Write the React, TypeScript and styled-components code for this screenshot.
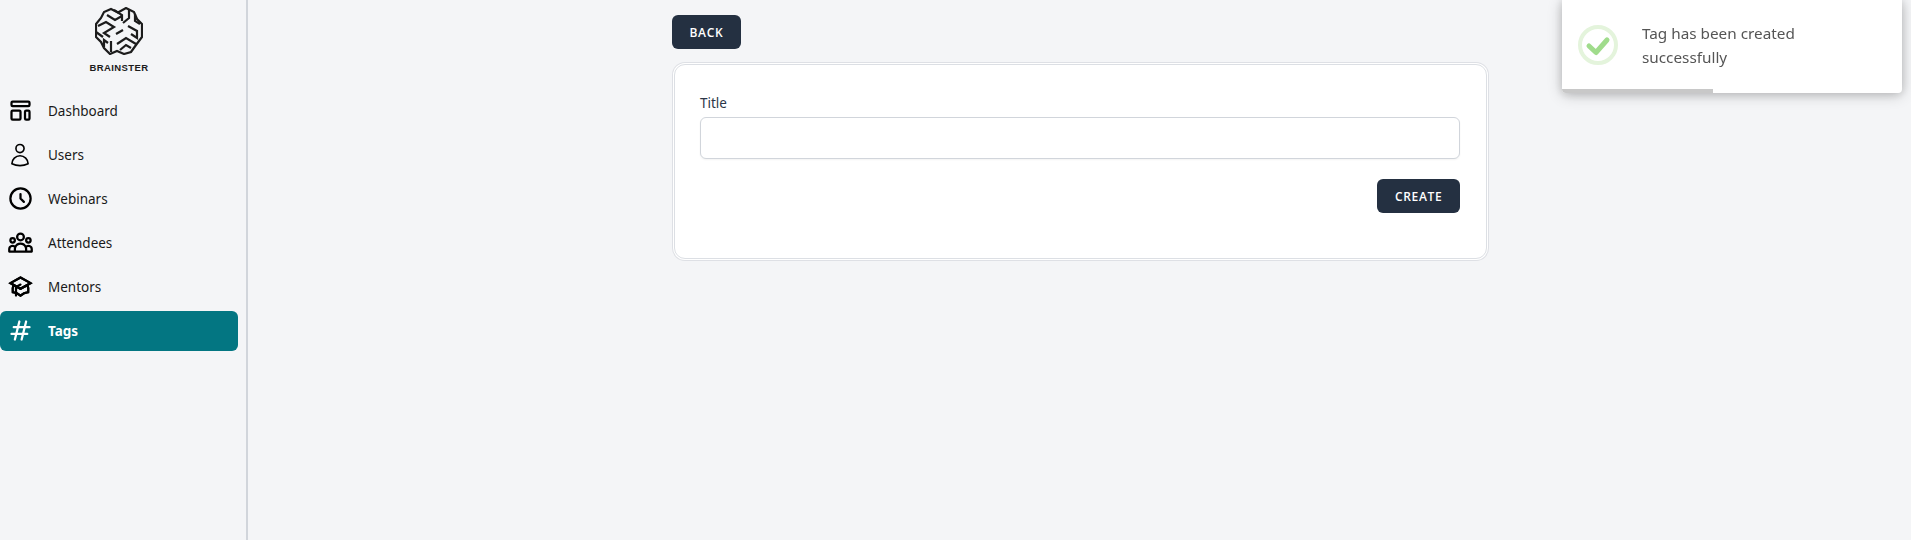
import React from 'react';
import styled, { createGlobalStyle } from 'styled-components';
import {
  HiOutlineAcademicCap,
  HiOutlineClock,
  HiOutlineHashtag,
  HiOutlineTemplate,
  HiOutlineUserGroup,
} from 'react-icons/hi';
import { HiOutlineUser } from 'react-icons/hi2';

const GlobalStyle = createGlobalStyle`
  html, body {
    margin: 0;
    padding: 0;
    background: #f4f5f7;
    font-family: "Noto Sans", "Open Sans", sans-serif;
  }
  * {
    box-sizing: border-box;
  }
`;

const Page = styled.div`
  display: flex;
  height: 540px;
  overflow: hidden;
  background: #f4f5f7;
`;

const Sidebar = styled.aside`
  width: 248px;
  flex-shrink: 0;
  padding-top: 7px;
  border-right: 2px solid #d1d5db;
`;

const LogoBlock = styled.div`
  width: 238px;
  display: flex;
  flex-direction: column;
  align-items: center;
  margin-bottom: 18px;
`;

const LogoName = styled.span`
  margin-top: 7px;
  font-family: "Liberation Sans", Arial, sans-serif;
  font-size: 9.500px;
  line-height: 11px;
  font-weight: 700;
  letter-spacing: 0.4px;
  color: #1c1c1c;
`;

const Nav = styled.nav`
  display: flex;
  flex-direction: column;
  gap: 4px;
  width: 238px;
`;

const NavItem = styled.a<{ $active?: boolean }>`
  display: flex;
  align-items: center;
  height: 40px;
  padding: 0 0 1px 6px;
  border-radius: 6px;
  font-size: 13.500px;
  font-weight: ${(p) => (p.$active ? 700 : 400)};
  color: ${(p) => (p.$active ? '#ffffff' : '#1a1a1a')};
  background: ${(p) => (p.$active ? '#037682' : 'transparent')};
`;

const NavIcon = styled.span<{ $active?: boolean }>`
  display: flex;
  align-items: center;
  justify-content: center;
  width: 28px;
  margin-right: 14px;
  flex-shrink: 0;
  color: ${(p) => (p.$active ? '#ffffff' : '#000000')};
`;

const Main = styled.main`
  flex: 1;
  display: flex;
  justify-content: center;
  padding: 15px 0 0 1px;
`;

const Column = styled.div`
  width: 816px;
  display: flex;
  flex-direction: column;
  align-items: flex-start;
`;

const Button = styled.button`
  height: 34px;
  padding: 0 17.500px;
  border: 0;
  border-radius: 6px;
  background: #243041;
  color: #ffffff;
  font-family: "Open Sans", sans-serif;
  font-size: 12px;
  font-weight: 600;
  letter-spacing: 0.7px;
  text-transform: uppercase;
`;

const Card = styled.section`
  width: 813px;
  height: 195px;
  margin: 15px 1px 0 2px;
  padding: 28px 26px 28px 25px;
  background: #ffffff;
  border: 1px solid #dcdfe4;
  border-radius: 11px;
  box-shadow: 0 0 0 1px #ffffff, 0 0 0 2px #dee0e5;
`;

const Label = styled.label`
  display: block;
  font-size: 13.500px;
  line-height: 20px;
  color: #2b3648;
  margin-bottom: 4px;
`;

const TextInput = styled.input`
  display: block;
  width: 100%;
  height: 42px;
  border: 1px solid #d1d5db;
  border-radius: 6px;
  background: #ffffff;
  box-shadow: 0 1px 2px rgba(0, 0, 0, 0.05);
`;

const Actions = styled.div`
  display: flex;
  justify-content: flex-end;
  margin-top: 20px;
`;

const Toast = styled.div`
  position: fixed;
  top: 0;
  right: 9px;
  width: 340px;
  height: 93px;
  display: flex;
  align-items: center;
  padding: 0 16px 3px;
  background: #ffffff;
  border-radius: 0 0 4px 4px;
  box-shadow: 0 1px 10px rgba(0, 0, 0, 0.15), 0 2px 15px rgba(0, 0, 0, 0.2);
  font-family: "Noto Sans", sans-serif;
  font-size: 15.300px;
  line-height: 24px;
  color: #555555;
`;

const ToastIcon = styled.svg`
  width: 40px;
  height: 40px;
  flex-shrink: 0;
  margin-right: 24px;
`;

const ToastText = styled.div`
  width: 200px;
`;

const Progress = styled.div`
  position: absolute;
  left: 0;
  bottom: 0;
  height: 4px;
  background: #c8c8c8;
  border-bottom-left-radius: 4px;
`;

const navItems = [
  { label: 'Dashboard', Icon: HiOutlineTemplate, size: 27 },
  { label: 'Users', Icon: HiOutlineUser, size: 26 },
  { label: 'Webinars', Icon: HiOutlineClock, size: 27 },
  { label: 'Attendees', Icon: HiOutlineUserGroup, size: 27 },
  { label: 'Mentors', Icon: HiOutlineAcademicCap, size: 27 },
  { label: 'Tags', Icon: HiOutlineHashtag, size: 27, active: true },
];

const BrainLogo = () => (
  <svg width="48" height="48" viewBox="0 0 48 48" fill="none" stroke="#1c1c1c" strokeWidth="2.200">
    <path d="M16 2 L23 5.500 L31 1 L39 5 L42 12 L47 17 V30 L41 38 L36 45 L29 47 L22 44 L15 47 L9 41 L6 35 L1 30 V17 L6 11 L9 5 Z" />
    <path d="M12 8 L20 13 L27 9 M19 3 L27 8 V14 M34 2 V11 L28 16 M40 7 V14 L45 17" />
    <path d="M3 19 L11 15 L19 20 L9 26 L15 30 M1 25 L8 30 M21 27 L28 23 M33 19 L42 24 V31 L36 27" />
    <path d="M16 34 V45 M9 40 V33 L13 36 M22 37 L31 31 L41 37 M25 43 L31 38 L36 41" />
  </svg>
);

const App: React.FunctionComponent = () => (
  <Page>
    <GlobalStyle />
    <Sidebar>
      <LogoBlock>
        <BrainLogo />
        <LogoName>BRAINSTER</LogoName>
      </LogoBlock>
      <Nav>
        {navItems.map(({ label, Icon, size, active }) => (
          <NavItem key={label} $active={active}>
            <NavIcon $active={active}>
              <Icon size={size} />
            </NavIcon>
            {label}
          </NavItem>
        ))}
      </Nav>
    </Sidebar>
    <Main>
      <Column>
        <Button>Back</Button>
        <Card>
          <Label>Title</Label>
          <TextInput />
          <Actions>
            <Button>Create</Button>
          </Actions>
        </Card>
      </Column>
    </Main>
    <Toast>
      <ToastIcon viewBox="0 0 40 40" fill="none">
        <circle cx="20" cy="20" r="18" stroke="#e4f4dc" strokeWidth="4" />
        <path d="M11 21 L18 27.500 L29 15" stroke="#a0dc8c" strokeWidth="5" strokeLinecap="round" strokeLinejoin="round" />
      </ToastIcon>
      <ToastText>Tag has been created successfully</ToastText>
      <Progress style={{ width: `${(151 / 340) * 100}%` }} />
    </Toast>
  </Page>
);

export default App;
